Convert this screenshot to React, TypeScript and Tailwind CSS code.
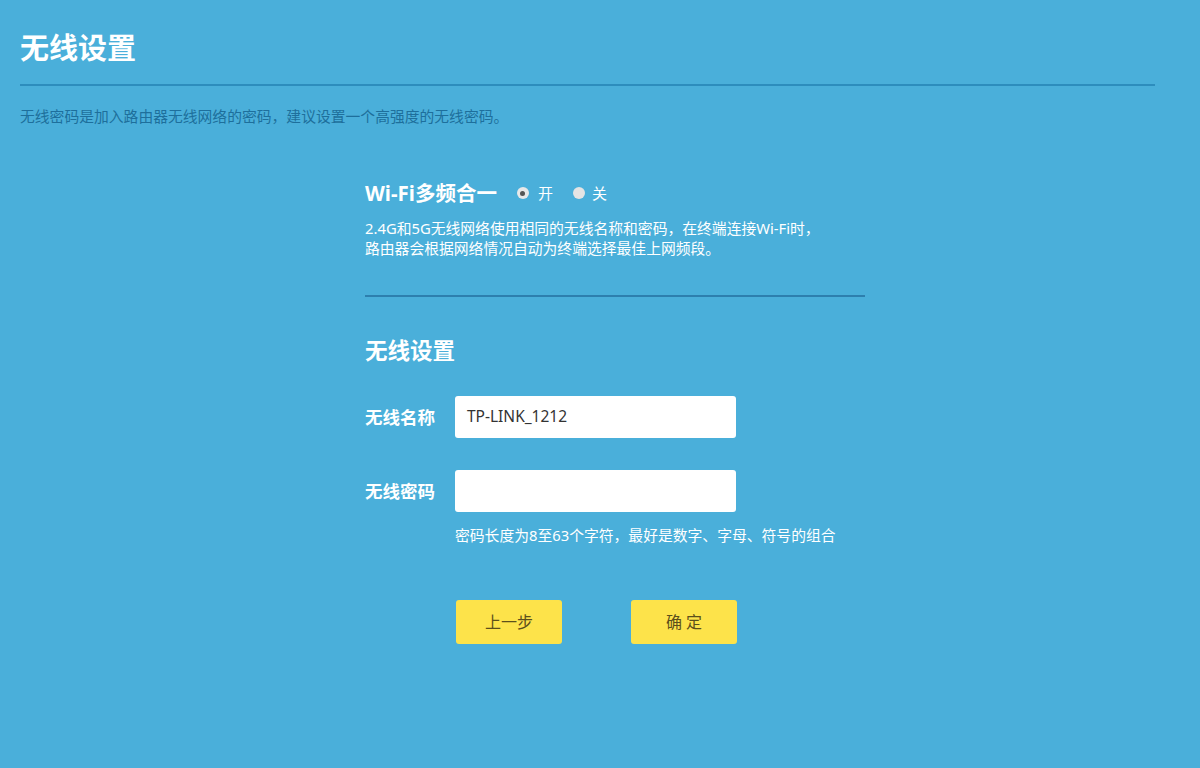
export default function App() {
  return (
    <div
      className="w-[1200px] h-[768px] bg-[#4aafda] overflow-hidden text-white"
      style={{ fontFamily: '"Noto Sans", "Noto Sans CJK SC", sans-serif' }}
    >
      <div className="pl-[20px] pr-[45px]">
        <h1 className="pt-[29px] h-[84px] text-[29px] leading-[38px] font-bold">无线设置</h1>
        <div className="h-[2px] bg-[#2d8dbd]"></div>
        <p className="mt-[20px] text-[14.8px] leading-[20px] text-[#1e6f9c]">
          无线密码是加入路由器无线网络的密码，建议设置一个高强度的无线密码。
        </p>
      </div>

      <div className="ml-[365px] w-[500px] mt-[54px]">
        <div className="flex items-center h-[26px]">
          <span className="text-[20.5px] font-bold">Wi-Fi多频合一</span>
          <label className="flex items-center ml-[20px] text-[15px]">
            <span className="w-[12px] h-[12px] rounded-full bg-[#e8e8e8] flex items-center justify-center">
              <span className="w-[5px] h-[5px] rounded-full bg-[#555]"></span>
            </span>
            <span className="ml-[9px]">开</span>
          </label>
          <label className="flex items-center ml-[20px] text-[15px]">
            <span className="w-[12px] h-[12px] rounded-full bg-[#e4e4e4]"></span>
            <span className="ml-[7px]">关</span>
          </label>
        </div>
        <p className="mt-[12px] text-[14.8px] leading-[20px] whitespace-nowrap">
          2.4G和5G无线网络使用相同的无线名称和密码，在终端连接Wi-Fi时，
          <br />
          路由器会根据网络情况自动为终端选择最佳上网频段。
        </p>
        <div className="mt-[37px] h-[2px] bg-[#2d7fae]"></div>

        <h2 className="mt-[39px] text-[22.5px] leading-[30px] font-bold">无线设置</h2>

        <div className="mt-[30px] flex items-center">
          <span className="w-[90px] text-[17.5px] font-bold">无线名称</span>
          <div className="w-[281px] h-[42px] bg-white rounded-[3px] flex items-center px-[12px] text-[15.5px] text-[#333]">
            TP-LINK_1212
          </div>
        </div>
        <div className="mt-[32px] flex items-center">
          <span className="w-[90px] text-[17.5px] font-bold">无线密码</span>
          <div className="w-[281px] h-[42px] bg-white rounded-[3px]"></div>
        </div>
        <p className="ml-[90px] mt-[13px] text-[14.8px] leading-[20px] whitespace-nowrap">
          密码长度为8至63个字符，最好是数字、字母、符号的组合
        </p>

        <div className="ml-[91px] mt-[55px] flex gap-[69px]">
          <button className="w-[106px] h-[44px] bg-[#fde34a] rounded-[3px] text-[16px] text-[#5c4f1c]">
            上一步
          </button>
          <button className="w-[106px] h-[44px] bg-[#fde34a] rounded-[3px] text-[16px] text-[#5c4f1c] tracking-[4px] pl-[4px]">
            确定
          </button>
        </div>
      </div>
    </div>
  );
}
